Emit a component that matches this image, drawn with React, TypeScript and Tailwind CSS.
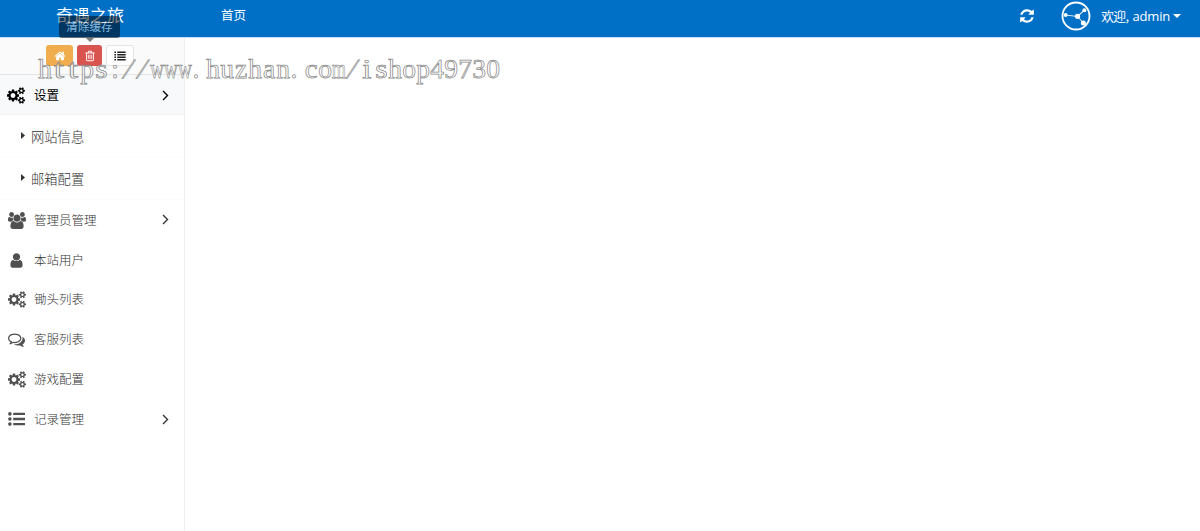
import React from "react";

type IconProps = { className?: string };

const COGS =
  "M896 896q0-106-75-181t-181-75-181 75-75 181 75 181 181 75 181-75 75-181zm768 512q0-52-38-90t-90-38-90 38-38 90q0 53 37.5 90.5t90.5 37.5 90.5-37.5 37.5-90.5zm0-1024q0-52-38-90t-90-38-90 38-38 90q0 53 37.5 90.5t90.5 37.5 90.5-37.5 37.5-90.5zm-384 421v185q0 10-7 19.5t-16 10.5l-155 24q-11 35-32 76 34 48 90 115 7 11 7 20 0 12-7 19-23 30-82.5 89.5t-78.5 59.5q-11 0-21-7l-115-90q-37 19-77 31-11 108-23 155-7 24-30 24h-186q-11 0-20-7.5t-10-17.5l-23-153q-34-10-75-31l-118 89q-7 7-20 7-11 0-21-8-144-133-144-160 0-9 7-19 10-14 41-53t47-61q-23-44-35-82l-152-24q-10-1-17-9.5t-7-19.5v-185q0-10 7-19.5t16-10.5l155-24q11-35 32-76-34-48-90-115-7-11-7-20 0-12 7-20 22-30 82-89t79-59q11 0 21 7l115 90q34-18 77-32 11-108 23-154 7-24 30-24h186q11 0 20 7.5t10 17.5l23 153q34 10 75 31l118-89q8-7 20-7 11 0 21 8 144 133 144 160 0 8-7 19-12 16-42 54t-45 60q23 48 34 82l152 23q10 2 17 10.5t7 19.5zm640 533v140q0 16-149 31-12 27-30 52 51 113 51 138 0 4-4 7-122 71-124 71-8 0-46-47t-52-68q-20 2-30 2t-30-2q-14 21-52 68t-46 47q-2 0-124-71-4-3-4-7 0-25 51-138-18-25-30-52-149-15-149-31v-140q0-16 149-31 13-29 30-52-51-113-51-138 0-4 4-7 4-2 35-20t59-34 30-16q8 0 46 46.5t52 67.5q20-2 30-2t30 2q51-71 92-112l6-2q4 0 124 70 4 3 4 7 0 25-51 138 17 23 30 52 149 15 149 31zm0-1024v140q0 16-149 31-12 27-30 52 51 113 51 138 0 4-4 7-122 71-124 71-8 0-46-47t-52-68q-20 2-30 2t-30-2q-14 21-52 68t-46 47q-2 0-124-71-4-3-4-7 0-25 51-138-18-25-30-52-149-15-149-31v-140q0-16 149-31 13-29 30-52-51-113-51-138 0-4 4-7 4-2 35-20t59-34 30-16q8 0 46 46.5t52 67.5q20-2 30-2t30 2q51-71 92-112l6-2q4 0 124 70 4 3 4 7 0 25-51 138 17 23 30 52 149 15 149 31z";
const USERS =
  "M593 896q-162 5-265 128h-134q-82 0-138-40.5t-56-118.5q0-353 124-353 6 0 43.5 21t97.5 42.5 119 21.5q67 0 133-23-5 37-5 66 0 139 81 256zm1071 637q0 120-73 189.5t-194 69.5h-874q-121 0-194-69.5t-73-189.5q0-53 3.5-103.5t14-109 26.5-108.5 43-97.5 62-81 85.5-53.5 111.5-20q10 0 43 21.5t73 48 107 48 135 21.5 135-21.5 107-48 73-48 43-21.5q61 0 111.5 20t85.5 53.5 62 81 43 97.5 26.5 108.5 14 109 3.5 103.5zm-1024-1277q0 106-75 181t-181 75-181-75-75-181 75-181 181-75 181 75 75 181zm704 384q0 159-112.5 271.5t-271.5 112.5-271.5-112.5-112.5-271.5 112.5-271.5 271.5-112.5 271.5 112.5 112.5 271.5zm576 225q0 78-56 118.5t-138 40.5h-134q-103-123-265-128 81-117 81-256 0-29-5-66 66 23 133 23 59 0 119-21.5t97.5-42.5 43.5-21q124 0 124 353zm-128-609q0 106-75 181t-181 75-181-75-75-181 75-181 181-75 181 75 75 181z";
const USER =
  "M1536 1399q0 109-62.5 187t-150.5 78h-854q-88 0-150.5-78t-62.5-187q0-85 8.5-160.5t31.5-152 58.5-131 94-89 134.5-34.5q131 128 313 128t313-128q76 0 134.5 34.5t94 89 58.5 131 31.5 152 8.5 160.5zm-256-887q0 159-112.5 271.5t-271.5 112.5-271.5-112.5-112.5-271.5 112.5-271.5 271.5-112.5 271.5 112.5 112.5 271.5z";
const COMMENTS =
  "M704 384q-153 0-286 52t-211.5 141-78.5 191q0 82 53 158t149 132l97 56-35 84q34-20 62-39l44-31 53 10q78 14 153 14 153 0 286-52t211.5-141 78.5-191-78.5-191-211.5-141-286-52zm0-128q191 0 353.5 68.5t256.5 186.5 94 257-94 257-256.5 186.5-353.5 68.5q-86 0-176-16-124 88-278 128-36 9-86 16h-3q-11 0-20.5-8t-11.5-21q-1-3-1-6.5t.5-6.5 2-6l2.5-5 3.5-5.5 4-5 4.5-5 4-4.5q5-6 23-25t26-29.5 22.5-29 25-38.5 20.5-44q-124-72-195-177t-71-224q0-139 94-257t256.5-186.5 353.5-68.5zm822 1169q10 24 20.5 44t25 38.5 22.5 29 26 29.5 23 25q1 1 4 4.5t4.5 5 4 5 3.5 5.5l2.5 5 2 6 .5 6.5-1 6.5q-3 14-13 22t-22 7q-50-7-86-16-154-40-278-128-90 16-176 16-271 0-472-132 58 4 88 4 161 0 309-45t264-129q125-92 192-212t67-254q0-77-23-152 129 71 204 178t75 230q0 120-71 224.5t-195 176.5z";
const HOME =
  "M1472 992v480q0 26-19 45t-45 19h-384v-384h-256v384h-384q-26 0-45-19t-19-45v-480q0-1 .5-3t.5-3l575-474 575 474q1 2 1 6zm223-69l-62 74q-8 9-21 11h-3q-13 0-21-7l-692-577-692 577q-12 8-24 7-13-2-21-11l-62-74q-8-10-7-23.5t11-21.5l719-599q32-26 76-26t76 26l244 204v-195q0-14 9-23t23-9h192q14 0 23 9t9 23v408l219 182q10 8 11 21.5t-7 23.5z";
const TRASH =
  "M704 736v576q0 14-9 23t-23 9h-64q-14 0-23-9t-9-23v-576q0-14 9-23t23-9h64q14 0 23 9t9 23zm256 0v576q0 14-9 23t-23 9h-64q-14 0-23-9t-9-23v-576q0-14 9-23t23-9h64q14 0 23 9t9 23zm256 0v576q0 14-9 23t-23 9h-64q-14 0-23-9t-9-23v-576q0-14 9-23t23-9h64q14 0 23 9t9 23zm128 724v-948h-896v948q0 22 7 40.5t14.5 27 10.5 8.5h832q3 0 10.5-8.5t14.5-27 7-40.5zm-672-1076h448l-48-117q-7-9-17-11h-317q-10 2-17 11zm928 32v64q0 14-9 23t-23 9h-96v948q0 83-47 143.5t-113 60.5h-832q-66 0-113-58.5t-47-141.5v-952h-96q-14 0-23-9t-9-23v-64q0-14 9-23t23-9h309l70-167q15-37 54-63t79-26h320q40 0 79 26t54 63l70 167h309q14 0 23 9t9 23z";
const REFRESH =
  "M1639 1056q0 5-1 7-64 268-268 434.5t-478 166.5q-146 0-282.5-55t-243.5-157l-129 129q-19 19-45 19t-45-19-19-45v-448q0-26 19-45t45-19h448q26 0 45 19t19 45-19 45l-137 137q71 66 161 102t187 36q134 0 250-65t186-179q11-17 53-117 8-23 30-23h192q13 0 22.5 9.5t9.5 22.5zm25-800v448q0 26-19 45t-45 19h-448q-26 0-45-19t-19-45 19-45l138-138q-148-137-349-137-134 0-250 65t-186 179q-11 17-53 117-8 23-30 23h-199q-13 0-22.5-9.5t-9.5-22.5v-7q65-268 270-434.5t480-166.5q146 0 284 55.5t245 156.5l130-129q19-19 45-19t45 19 19 45z";

function Glyph({ d, w = 1792, className }: IconProps & { d: string; w?: number }) {
  return (
    <svg viewBox={`0 0 ${w} 1792`} fill="currentColor" className={className}>
      <path d={d} />
    </svg>
  );
}

/* Square bullets for the toolbar, round bullets for the menu. */
function ListIcon({ round, className }: IconProps & { round?: boolean }) {
  const rows = round ? [2.6, 8, 13.4] : [2, 6, 10, 14];
  return (
    <svg viewBox="0 0 18 16" fill="currentColor" className={className}>
      {rows.map((y) => (
        <g key={y}>
          {round ? <circle cx="2" cy={y} r="1.9" /> : <rect x="0" y={y - 1.2} width="2.6" height="2.4" />}
          <rect x={round ? 5.5 : 4.5} y={y - 1.25} width={round ? 12.5 : 13.5} height="2.5" rx="0.3" />
        </g>
      ))}
    </svg>
  );
}

function Chevron({ className }: IconProps) {
  return (
    <svg viewBox="0 0 7 11" fill="none" stroke="currentColor" strokeWidth="1.4" className={className}>
      <path d="M1 1l4.5 4.5L1 10" />
    </svg>
  );
}

function Logo() {
  return (
    <svg viewBox="0 0 30 30" fill="none" stroke="white" className="h-[30px] w-[30px]">
      <circle cx="15" cy="15" r="13.5" strokeWidth="1.8" />
      <path d="M4.5 14L16.5 15.5L23.5 9M16.5 15.5L22.5 22" strokeWidth="1.1" opacity="0.85" />
      <g fill="white" stroke="none">
        <circle cx="4.7" cy="14" r="1.9" />
        <circle cx="16.5" cy="15.3" r="2.6" />
        <circle cx="23.4" cy="9.2" r="2" />
        <circle cx="22.4" cy="22" r="2.5" />
      </g>
    </svg>
  );
}

type Item = { label: string; icon: React.ReactNode; arrow?: boolean };

const cogs = <Glyph d={COGS} w={1920} className="h-[17px] w-[18px]" />;

const items: Item[] = [
  { label: "管理员管理", icon: <Glyph d={USERS} w={1920} className="mt-px h-[17px] w-[18px]" />, arrow: true },
  { label: "本站用户", icon: <Glyph d={USER} className="mt-px h-[17px] w-[17px]" /> },
  { label: "锄头列表", icon: cogs },
  { label: "客服列表", icon: <Glyph d={COMMENTS} className="mt-px h-[17px] w-[17px]" /> },
  { label: "游戏配置", icon: cogs },
  { label: "记录管理", icon: <ListIcon round className="h-[16px] w-[17px]" />, arrow: true },
];

function MenuRow({ label, icon, arrow }: Item) {
  return (
    <li className="flex h-[39.85px] items-center pl-[7px] pr-[15px]">
      <span className="flex w-[19px] justify-center text-[#505050]">{icon}</span>
      <span className="ml-2 flex-1 text-[12.5px] leading-none">{label}</span>
      {arrow && <Chevron className="h-[11px] w-[7px]" />}
    </li>
  );
}

const WATERMARK = "https://www.huzhan.com/ishop49730";

/* Widens or narrows each serif letter to fill its fixed-width cell. */
const FIT: Record<string, string> = {
  w: "scale-x-[0.7]",
  m: "scale-x-[0.66]",
  "/": "-skew-x-[18deg]",
  t: "scale-x-[1.35]",
  s: "scale-x-[1.15]",
  i: "scale-x-[1.2]",
  c: "scale-x-[1.05]",
  ".": "-translate-x-[3px]",
};

function Watermark() {
  return (
    <div className="pointer-events-none absolute left-[38px] top-[52px] flex font-['Liberation_Serif',serif] text-[27.5px] leading-[34px] text-white/20 [-webkit-text-stroke:0.75px_#8c8c8c]">
      {WATERMARK.split("").map((ch, i) => (
        <span key={i} className="flex w-[14px] justify-center">
          <span className={FIT[ch]}>{ch}</span>
        </span>
      ))}
    </div>
  );
}

export default function App() {
  return (
    <div className="relative flex h-[531px] w-[1200px] flex-col overflow-hidden bg-white font-['Noto_Sans_CJK_SC',sans-serif] font-light text-[#333]">
      <header className="flex h-[38px] shrink-0 items-start border-b border-[#c3def3] bg-[#006fc6] text-white">
        <h1 className="w-[184px] pl-[56px] pt-[6px] text-[17px] font-normal leading-[18px]">奇遇之旅</h1>
        <a className="ml-[37px] pt-[8px] text-[12.5px] font-normal leading-[14px]">首页</a>
        <div className="ml-auto flex h-[31px] items-center pr-[19px]">
          <Glyph d={REFRESH} className="mr-[26px] h-[16px] w-[16px]" />
          <Logo />
          <span className="ml-[10px] flex items-center pt-px text-[12.8px] leading-none">
            <span className="font-normal tracking-[-0.6px]">欢迎,</span>
            <span className="ml-[4px] font-['Open_Sans',sans-serif] text-[13px] font-normal tracking-[-0.2px]">admin</span>
          </span>
          <svg viewBox="0 0 8 4" fill="currentColor" className="ml-[3px] h-[4px] w-[8px]">
            <path d="M0 0h8L4 4z" />
          </svg>
        </div>
      </header>

      <div className="flex flex-1">
        <aside className="w-[185px] border-r border-[#efefef]">
          <div className="flex h-[37px] items-start gap-[4px] border-b border-[#e5e5e5] bg-[#fafafa] pl-[46px] pt-[7px]">
            <button className="flex h-[21px] w-[27px] items-center justify-center rounded-[3px] bg-[#f0ad4e] text-white">
              <Glyph d={HOME} className="h-[12px] w-[12px]" />
            </button>
            <button className="flex h-[21px] w-[25px] items-center justify-center rounded-[3px] bg-[#d9534f] text-white">
              <Glyph d={TRASH} className="h-[12px] w-[12px]" />
            </button>
            <button className="flex h-[21px] w-[28px] items-center justify-center rounded-[3px] border border-[#e5e5e5] bg-white text-[#222]">
              <ListIcon className="h-[10px] w-[12px]" />
            </button>
          </div>
          <div className="flex h-[40px] items-center border-b border-[#f1f3f5] bg-[#f7f9fb] pb-px pl-[7px] pr-[15px] pt-[3px] text-black">
            {cogs}
            <span className="ml-[9px] flex-1 text-[12.5px] font-normal leading-none">设置</span>
            <Chevron className="h-[11px] w-[7px]" />
          </div>
          <ul className="text-[13.3px] leading-none">
            {["网站信息", "邮箱配置"].map((label) => (
              <li key={label} className="flex h-[42.5px] items-center border-b border-[#fcfcfc] pl-[21px] pt-px">
                <svg viewBox="0 0 4 7" fill="currentColor" className="mb-[2px] mr-[6px] h-[7px] w-[4px]">
                  <path d="M0 0l4 3.5-4 3.5z" />
                </svg>
                {label}
              </li>
            ))}
          </ul>
          <ul>
            {items.map((item) => (
              <MenuRow key={item.label} {...item} />
            ))}
          </ul>
        </aside>
        <main className="flex-1" />
      </div>

      <div className="absolute left-[59px] top-[16px] flex w-[61px] flex-col items-center opacity-50">
        <div className="flex h-[22px] w-full items-center justify-center rounded-[3px] bg-black text-[11.6px] font-normal leading-none text-white">
          清除缓存
        </div>
        <svg viewBox="0 0 8 4" className="h-[4px] w-[8px]">
          <path d="M0 0h8L4 4z" />
        </svg>
      </div>

      <Watermark />
    </div>
  );
}
